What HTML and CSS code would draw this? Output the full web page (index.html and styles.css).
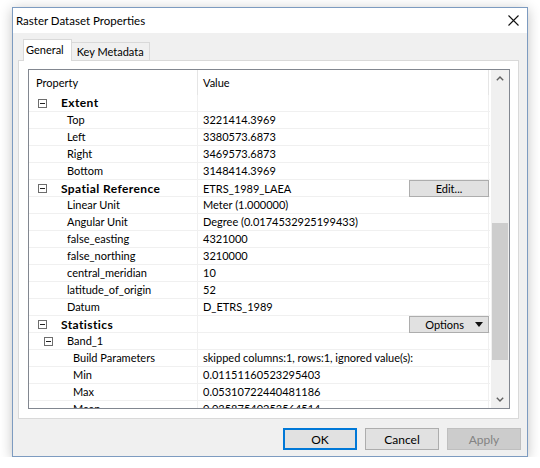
FILE: index.html
```html
<!DOCTYPE html>
<html lang="en">

<head>
    <meta charset="UTF-8">
    <meta name="viewport" content="width=device-width, initial-scale=1.0">
    <title>Raster Dataset Properties</title>
    <link rel="stylesheet" href="styles.css">
</head>

<body>
    <div class="window">
        <div class="titlebar">
            <span class="title">Raster Dataset Properties</span>
            <svg class="close" width="11" height="11" viewBox="0 0 11 11">
                <path d="M0.5 0.5L10.5 10.5M10.5 0.5L0.5 10.5" stroke="#111" stroke-width="1.1" />
            </svg>
        </div>
        <div class="content">
            <div class="tabs">
                <div class="tab active">General</div>
                <div class="tab">Key Metadata</div>
            </div>
            <div class="panel">
                <div class="grid">
                    <div class="rows">
                        <div class="head">
                            <div class="name">Property</div>
                            <div class="value">Value</div>
                        </div>
                        <div class="row cat">
                            <div class="name"><svg class="box" width="9" height="9" viewBox="0 0 9 9"><rect x="0.5" y="0.5" width="8" height="8" fill="#fff" stroke="#6d6d6d" /><path d="M2 4.5h5" stroke="#222" /></svg>Extent</div>
                            <div class="value"></div>
                        </div>
                        <div class="row lvl1"><div class="name">Top</div><div class="value">3221414.3969</div></div>
                        <div class="row lvl1"><div class="name">Left</div><div class="value">3380573.6873</div></div>
                        <div class="row lvl1"><div class="name">Right</div><div class="value">3469573.6873</div></div>
                        <div class="row lvl1"><div class="name">Bottom</div><div class="value">3148414.3969</div></div>
                        <div class="row cat">
                            <div class="name"><svg class="box" width="9" height="9" viewBox="0 0 9 9"><rect x="0.5" y="0.5" width="8" height="8" fill="#fff" stroke="#6d6d6d" /><path d="M2 4.5h5" stroke="#222" /></svg>Spatial Reference</div>
                            <div class="value">ETRS_1989_LAEA<span class="cellbtn">Edit...</span></div>
                        </div>
                        <div class="row lvl1"><div class="name">Linear Unit</div><div class="value">Meter (1.000000)</div></div>
                        <div class="row lvl1"><div class="name">Angular Unit</div><div class="value">Degree (0.0174532925199433)</div></div>
                        <div class="row lvl1"><div class="name">false_easting</div><div class="value">4321000</div></div>
                        <div class="row lvl1"><div class="name">false_northing</div><div class="value">3210000</div></div>
                        <div class="row lvl1"><div class="name">central_meridian</div><div class="value">10</div></div>
                        <div class="row lvl1"><div class="name">latitude_of_origin</div><div class="value">52</div></div>
                        <div class="row lvl1"><div class="name">Datum</div><div class="value">D_ETRS_1989</div></div>
                        <div class="row cat">
                            <div class="name"><svg class="box" width="9" height="9" viewBox="0 0 9 9"><rect x="0.5" y="0.5" width="8" height="8" fill="#fff" stroke="#6d6d6d" /><path d="M2 4.5h5" stroke="#222" /></svg>Statistics</div>
                            <div class="value"><span class="cellbtn options">Options<svg width="8" height="5" viewBox="0 0 8 5"><path d="M0 0h8L4 5z" fill="#111" /></svg></span></div>
                        </div>
                        <div class="row sub">
                            <div class="name"><svg class="box" width="9" height="9" viewBox="0 0 9 9"><rect x="0.5" y="0.5" width="8" height="8" fill="#fff" stroke="#6d6d6d" /><path d="M2 4.5h5" stroke="#222" /></svg>Band_1</div>
                            <div class="value"></div>
                        </div>
                        <div class="row lvl2"><div class="name">Build Parameters</div><div class="value">skipped columns:1, rows:1, ignored value(s):</div></div>
                        <div class="row lvl2"><div class="name">Min</div><div class="value">0.01151160523295403</div></div>
                        <div class="row lvl2"><div class="name">Max</div><div class="value">0.05310722440481186</div></div>
                        <div class="row lvl2"><div class="name">Mean</div><div class="value">0.03587540253564514</div></div>
                    </div>
                    <div class="scrollbar">
                        <div class="arrow">
                            <svg width="8" height="5" viewBox="0 0 8 5"><path d="M0.8 4.2L4 1L7.2 4.2" fill="none" stroke="#606060" stroke-width="1.4" /></svg>
                        </div>
                        <div class="track">
                            <div class="thumb"></div>
                        </div>
                        <div class="arrow">
                            <svg width="8" height="5" viewBox="0 0 8 5"><path d="M0.8 0.8L4 4L7.2 0.8" fill="none" stroke="#606060" stroke-width="1.4" /></svg>
                        </div>
                    </div>
                </div>
            </div>
            <div class="buttons">
                <button class="btn default">OK</button>
                <button class="btn">Cancel</button>
                <button class="btn" disabled>Apply</button>
            </div>
        </div>
    </div>
</body>

</html>
```

FILE: styles.css
```css
body {
    margin: 0;
    background-color: #fff;
    font-family: Lato, "Noto Sans", sans-serif;
    font-size: 11px;
    color: #000;
}

.window {
    margin: 7px 0 0 12px;
    width: 516px;
    height: 450px;
    box-sizing: border-box;
    border: 1px solid #7d9bc0;
    background-color: #f0f0f0;
    box-shadow: 0 2px 12px rgba(0, 0, 0, 0.24);
    display: flex;
    flex-direction: column;
}

.titlebar {
    height: 25px;
    background-color: #fff;
    display: flex;
    align-items: center;
    justify-content: space-between;
    padding: 0 8px 0 3px;
}

.title {
    font-size: 11.5px;
}

.content {
    flex: 1;
    display: flex;
    flex-direction: column;
    padding: 0 8px 0 5px;
}

.tabs {
    height: 27px;
    display: flex;
    align-items: flex-end;
    padding-left: 5px;
}

.tab {
    height: 17px;
    line-height: 17px;
    border: 1px solid #d9d9d9;
    border-bottom: none;
    background-color: #f0f0f0;
    padding: 0 5px 0 5px;
    margin-left: -1px;
}

.tab.active {
    height: 21px;
    line-height: 19px;
    margin-left: 0;
    margin-bottom: -1px;
    padding: 0 7px 0 2px;
    background-color: #fff;
    position: relative;
    z-index: 1;
}

.panel {
    height: 359px;
    box-sizing: border-box;
    border: 1px solid #d9d9d9;
    background-color: #fff;
    padding: 8px 8px 9px 9px;
}

.grid {
    height: 100%;
    box-sizing: border-box;
    border: 1px solid #828790;
    display: flex;
}

.rows {
    flex: 1;
    overflow: hidden;
}

.head,
.row {
    display: grid;
    grid-template-columns: 169px 291px;
}

.head {
    height: 25px;
    line-height: 25px;
}

.head>div {
    border-right: 1px solid #e5e5e5;
}

.row {
    height: 17px;
    box-sizing: border-box;
    border-bottom: 1px solid #f0f0f0;
    line-height: 16px;
}

.row>div {
    border-right: 1px solid #f0f0f0;
    white-space: nowrap;
}

.name {
    padding-left: 7px;
}

.value {
    padding-left: 5px;
}

.row .value {
    display: flex;
    align-items: center;
}

.cat .name,
.sub .name {
    display: flex;
    align-items: center;
}

.cat .name {
    padding-left: 9px;
    font-weight: bold;
    font-size: 12px;
    letter-spacing: 0.4px;
}

.sub .name {
    padding-left: 15px;
}

.box {
    margin-right: 14px;
}

.lvl1 .name {
    padding-left: 38px;
}

.lvl2 .name {
    padding-left: 44px;
}

.cellbtn {
    margin-left: auto;
    margin-right: -1px;
    width: 80px;
    height: 17px;
    box-sizing: border-box;
    background-color: #e1e1e1;
    border: 1px solid #adadad;
    text-align: center;
    line-height: 15px;
    align-self: flex-start;
}

.cellbtn.options {
    display: flex;
    align-items: center;
    justify-content: flex-end;
    gap: 11px;
    padding-right: 5px;
}

.scrollbar {
    width: 18px;
    background-color: #f0f0f0;
    display: flex;
    flex-direction: column;
    margin-left: 1px;
}

.arrow {
    height: 17px;
    display: flex;
    align-items: center;
    justify-content: center;
}

.track {
    flex: 1;
}

.thumb {
    margin: 136px 1px 0 1px;
    height: 137px;
    background-color: #cdcdcd;
}

.buttons {
    display: flex;
    justify-content: flex-end;
    gap: 8px;
    margin: 9px -2px 0 0;
}

.btn {
    width: 74px;
    height: 22px;
    box-sizing: border-box;
    font-family: inherit;
    font-size: 12px;
    color: #000;
    background-color: #e1e1e1;
    border: 1px solid #adadad;
    padding: 0;
}

.btn.default {
    border: 2px solid #0078d7;
}

.btn:disabled {
    background-color: #cccccc;
    border-color: #bfbfbf;
    color: #838383;
}
```
